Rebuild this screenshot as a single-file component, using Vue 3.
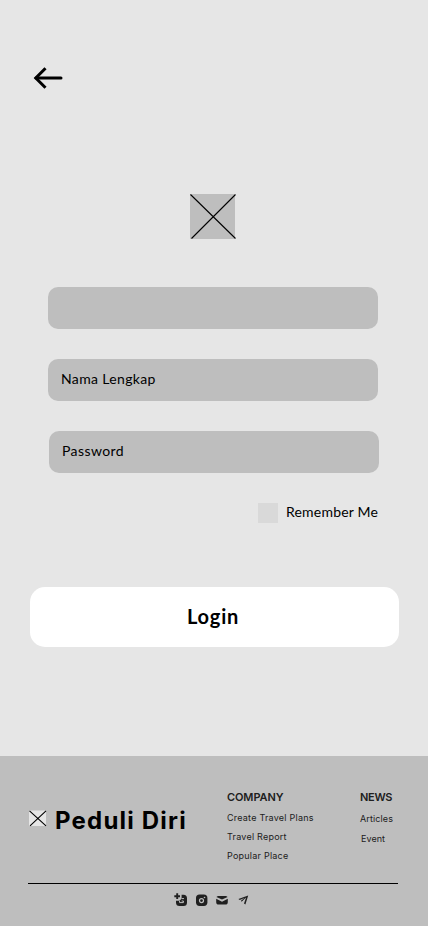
<script setup>
const company = ['Create Travel Plans', 'Travel Report', 'Popular Place']
</script>

<template>
  <main class="screen">
    <header class="top">
      <button class="back" aria-label="Back">
        <svg width="30" height="24" viewBox="0 0 30 24" fill="none" stroke="#000" stroke-width="3">
          <path d="M3 12H28" stroke-linecap="round" />
          <path d="M12.5 2.2L2.8 12L12.5 21.8" />
        </svg>
      </button>
    </header>

    <svg class="logo" width="46" height="45" viewBox="0 0 46 45">
      <path fill="#bebebe" d="M0 0h45v45H0z" />
      <path d="M.5 .5L45.5 44.5M45.5 .5L1.5 44.5" stroke="#000" stroke-width="1.1" />
    </svg>

    <form class="form" @submit.prevent>
      <div class="field"></div>
      <div class="field"><span class="name">Nama Lengkap</span></div>
      <div class="field shifted"><span class="password">Password</span></div>
      <label class="remember"><i class="box"></i><span>Remember Me</span></label>
      <button class="login"><span>Login</span></button>
    </form>

    <footer class="footer">
      <div class="columns">
        <div class="brand">
          <svg width="18" height="17" viewBox="0 0 18 17">
            <path fill="#e6e6e6" d="M0 .5h17v15.5H0z" />
            <path d="M.5 .8L17 15.8M17 .8L1 15.8" stroke="#000" stroke-width="1.1" />
          </svg>
          <strong>Peduli Diri</strong>
        </div>
        <nav class="company">
          <h2>COMPANY</h2>
          <a v-for="item in company" :key="item">{{ item }}</a>
        </nav>
        <nav class="news">
          <h2>NEWS</h2>
          <a class="articles">Articles</a>
          <a class="event">Event</a>
        </nav>
      </div>
      <div class="rule"></div>
      <div class="social">
        <svg width="14" height="14" viewBox="0 0 14 14">
          <path fill="#202020" d="M7.6 1.8H9.5Q13 1.8 13 5.3V9.5Q13 13 9.5 13H5.5Q2 13 2 9.5V7.8H5.5L7.6 5.8Z" />
          <path d="M3.2 .3V6M.3 3.2H6" stroke="#202020" stroke-width="1.9" />
          <path d="M7.8 5.6H10M5.6 8V9.6H9.4V8H7.6" fill="none" stroke="#bebebe" stroke-width="1" />
        </svg>
        <svg width="13" height="12" viewBox="0 0 13 12">
          <rect x="0" y=".5" width="11.4" height="11.4" rx="3.6" fill="#202020" />
          <circle cx="5.5" cy="6.6" r="2" fill="none" stroke="#bebebe" stroke-width="1.2" />
          <circle cx="8.5" cy="3.5" r=".8" fill="#bebebe" />
        </svg>
        <svg class="mail" width="12" height="10" viewBox="0 0 12 10">
          <path fill="#202020" d="M1.9.9H10.1L11.6 2.1L6 4.5L.4 2.1ZM.2 3.7L6 6.7L11.8 3.7V7Q11.8 9.6 9.2 9.6H2.8Q.2 9.6.2 7Z" />
        </svg>
        <svg class="plane" width="11" height="10" viewBox="0 0 11 10">
          <path fill="#202020" d="M.4 4L10.2.4L7.4 9.5L6 8.4L8.1 2.5L3.7 6.6L3.4 5.4L6.4 3.1L1.8 4.9Z" />
          <path fill="#202020" d="M3.2 5.5L5.2 4.8L3.7 6.8Z" />
        </svg>
      </div>
    </footer>
  </main>
</template>

<style>
body { background: #e6e6e6; }
</style>

<style scoped>
.screen {
  width: 428px;
  height: 926px;
  display: flex;
  flex-direction: column;
  overflow: hidden;
  background: #e6e6e6;
  color: #000;
  font-family: Lato, sans-serif;
}
svg { display: block; flex: none; }
button { padding: 0; border: 0; background: none; font: inherit; color: inherit; }
.top { padding: 66px 0 0 33px; height: 128px; }
.logo { margin-left: 190px; }
.form { display: flex; flex-direction: column; padding: 48px 0 0 48px; height: 469px; }
.field {
  width: 330px;
  height: 42px;
  margin-bottom: 30px;
  padding: 0 0 3px 13px;
  display: flex;
  align-items: center;
  box-sizing: border-box;
  border-radius: 10px;
  background: #bebebe;
  font-size: 14px;
  flex: none;
}
.shifted { margin-left: 1px; }
.field span { white-space: nowrap; }
.name { letter-spacing: .35px; }
.password { letter-spacing: .42px; }
.remember { display: flex; align-items: center; width: 331px; height: 20px; margin-left: 210px; font-size: 14px; letter-spacing: .2px; }
.remember span { padding-bottom: 3px; }
.box { width: 20px; height: 20px; margin-right: 8px; background: #d9d9d9; }
.login {
  width: 369px;
  height: 60px;
  flex: none;
  margin: 64px 0 0 -18px;
  padding: 0 3px 2px 0;
  border-radius: 15px;
  background: #fff;
  font-size: 20px;
  font-weight: 700;
  letter-spacing: .8px;
}
.footer { height: 170px; flex: none; background: #bebebe; font-family: Inter, sans-serif; }
.columns { display: flex; height: 127px; }
.brand { width: 227px; display: flex; align-items: flex-start; box-sizing: border-box; padding: 54px 0 0 29px; }
.brand strong { margin: -4px 0 0 8px; font-size: 24px; line-height: 30px; font-weight: 700; letter-spacing: 1.2px; white-space: nowrap; }
nav { display: flex; flex-direction: column; padding-top: 34px; color: #202020; }
.company { width: 133px; }
h2 { margin: 0 0 7px; font-size: 11px; line-height: 14px; font-weight: 600; letter-spacing: -.1px; }
.news h2 { letter-spacing: -.3px; }
nav a { font-size: 9px; line-height: 14px; margin-bottom: 5px; letter-spacing: .23px; white-space: nowrap; align-self: flex-start; }
.news .articles { margin: 1px 0 6px; letter-spacing: .1px; }
.news .event { margin-left: 1px; letter-spacing: .05px; }
.rule { width: 370px; height: 1px; margin-left: 28px; background: #000; }
.social { display: flex; align-items: center; gap: 8px; height: 14px; margin: 9px 0 0 174px; }
.mail { margin-left: -1px; }
.plane { margin-left: 2px; }
</style>
